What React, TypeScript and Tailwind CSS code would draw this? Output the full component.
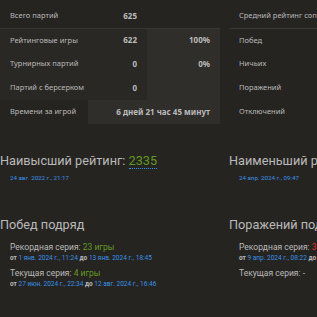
import React from "react";

const F = { fontFamily: '"Noto Sans", "Open Sans", sans-serif' };
const R = { fontFamily: 'Roboto, "Noto Sans", sans-serif' };

function Blue({ children }: { children: React.ReactNode }) {
  return <span className="text-[#3692e7] font-normal">{children}</span>;
}

export default function App() {
  const cell = "h-[24px] align-middle";
  return (
    <div className="w-[317px] h-[317px] overflow-hidden bg-[#262421] text-[#bababa]" style={F}>
      <div className="flex w-[560px] pt-[4px]">
        <div className="w-[229px] shrink-0">
          <table className="w-[220px] border-collapse text-[7.5px]">
            <tbody>
              <tr className="border-b border-[#3a3835]">
                <td className={`${cell} w-[88px] pl-[10px]`}>Всего партий</td>
                <td className={`${cell} w-[59px] pr-[10px] text-right font-bold text-[8px]`}>625</td>
                <td className={`${cell}`}></td>
              </tr>
              <tr>
                <td className={`${cell} pl-[10px] bg-[#2a2825]`}>Рейтинговые игры</td>
                <td className={`${cell} pr-[10px] text-right font-bold text-[8px] bg-[#2a2825]`}>622</td>
                <td className={`${cell} pr-[10px] text-right font-bold text-[8px] bg-[#302e2b]`}>100%</td>
              </tr>
              <tr>
                <td className={`${cell} pl-[10px] bg-[#2a2825]`}>Турнирных партий</td>
                <td className={`${cell} pr-[10px] text-right font-bold text-[8px] bg-[#2a2825]`}>0</td>
                <td className={`${cell} pr-[10px] text-right font-bold text-[8px] bg-[#302e2b]`}>0%</td>
              </tr>
              <tr>
                <td className={`${cell} pl-[10px] bg-[#2a2825]`}>Партий с берсерком</td>
                <td className={`${cell} pr-[10px] text-right font-bold text-[8px] bg-[#2a2825]`}>0</td>
                <td className={`${cell} bg-[#302e2b]`}></td>
              </tr>
              <tr>
                <td className={`${cell} pl-[10px]`}>Времени за игрой</td>
                <td colSpan={2} className={`${cell} pr-[10px] text-right font-bold text-[8px] bg-[#302e2b]`}>
                  6 дней 21 час 45 минут
                </td>
              </tr>
            </tbody>
          </table>
        </div>
        <div className="w-[229px] shrink-0">
          <table className="w-[220px] border-collapse text-[7.5px]">
            <tbody>
              <tr className="border-b border-[#3a3835]">
                <td className={`${cell} pl-[10px] whitespace-nowrap`}>Средний рейтинг соперников</td>
                <td className={`${cell}`}></td>
              </tr>
              <tr><td className={`${cell} pl-[10px]`}>Побед</td><td className={cell}></td></tr>
              <tr><td className={`${cell} pl-[10px]`}>Ничьих</td><td className={cell}></td></tr>
              <tr><td className={`${cell} pl-[10px]`}>Поражений</td><td className={cell}></td></tr>
              <tr><td className={`${cell} pl-[10px]`}>Отключений</td><td className={cell}></td></tr>
            </tbody>
          </table>
        </div>
      </div>

      <div className="flex w-[560px] mt-[28px]" style={R}>
        <div className="w-[229px] shrink-0">
          <div className="text-[12.7px] font-normal leading-[18px] whitespace-nowrap">
            Наивысший рейтинг:{" "}
            <span className="text-[#629924] border-b border-dotted border-[#3692e7]">2335</span>
          </div>
          <div className="pl-[10px] mt-[4px] text-[6.2px] text-[#3692e7] leading-[9px] whitespace-nowrap">24 авг. 2022 г., 21:17</div>
        </div>
        <div className="w-[229px] shrink-0">
          <div className="text-[12.7px] font-normal leading-[18px] whitespace-nowrap">
            Наименьший рейтинг:{" "}
            <span className="text-[#ac524f]">1500</span>
          </div>
          <div className="pl-[10px] mt-[4px] text-[6.2px] text-[#3692e7] leading-[9px] whitespace-nowrap">24 апр. 2024 г., 09:47</div>
        </div>
      </div>

      <div className="flex w-[560px] mt-[33px]" style={R}>
        <div className="w-[229px] shrink-0">
          <div className="text-[12.7px] font-normal leading-[18px] whitespace-nowrap">Побед подряд</div>
          <div className="pl-[10px] mt-[8px]">
            <div className="text-[8.5px] leading-[11px] whitespace-nowrap">
              Рекордная серия: <span className="text-[#629924]">23 игры</span>
            </div>
            <div className="text-[6.5px] leading-[11px] font-bold whitespace-nowrap">
              от <Blue>1 янв. 2024 г., 11:24</Blue> до <Blue>13 янв. 2024 г., 18:45</Blue>
            </div>
            <div className="text-[8.5px] leading-[11px] mt-[4px] whitespace-nowrap">
              Текущая серия: <span className="text-[#629924]">4 игры</span>
            </div>
            <div className="text-[6.5px] leading-[11px] font-bold whitespace-nowrap">
              от <Blue>27 июн. 2024 г., 22:34</Blue> до <Blue>12 авг. 2024 г., 16:46</Blue>
            </div>
          </div>
        </div>
        <div className="w-[229px] shrink-0">
          <div className="text-[12.7px] font-normal leading-[18px] whitespace-nowrap">Поражений подряд</div>
          <div className="pl-[10px] mt-[8px]">
            <div className="text-[8.5px] leading-[11px] whitespace-nowrap">
              Рекордная серия: <span className="text-[#e02d2d]">3 игры</span>
            </div>
            <div className="text-[6.5px] leading-[11px] font-bold whitespace-nowrap">
              от <Blue>9 апр. 2024 г., 08:22</Blue> до <Blue>9 апр. 2024 г., 09:10</Blue>
            </div>
            <div className="text-[8.5px] leading-[11px] mt-[4px] whitespace-nowrap">Текущая серия: -</div>
          </div>
        </div>
      </div>
    </div>
  );
}
